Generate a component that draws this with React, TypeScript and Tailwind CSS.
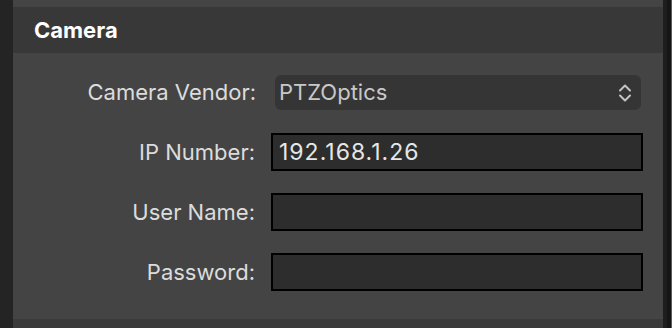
import React from 'react';

const font = { fontFamily: 'Inter, "Open Sans", sans-serif' };

const Field: React.FC<{ label: string; value?: string }> = ({ label, value }) => (
  <div className="flex items-center h-[38px]">
    <div className="w-[243px] pr-[1px] text-right text-[22px] text-[#dcdcdc]">{label}</div>
    <div className="ml-[15px] w-[372px] h-[38px] bg-[#2d2d2d] border-2 border-black flex items-center px-[6px] text-[23px] tracking-[1px] text-[#e6e6e6]">
      {value}
    </div>
  </div>
);

export default function App() {
  return (
    <div className="w-[672px] h-[328px] flex bg-[#151515] overflow-hidden" style={font}>
      <div className="w-[13px] bg-[#242424]" />
      <div className="w-[650px] flex flex-col">
        <div className="h-[7px] bg-[#444444]" />
        <div className="h-[46px] bg-[#383838] flex items-center pl-[21px]">
          <span className="text-[22px] font-bold text-white">Camera</span>
        </div>
        <div className="flex-1 bg-[#444444] flex flex-col pt-[22px]">
          <div className="flex items-center h-[35px]">
            <div className="w-[243px] text-right text-[22px] text-[#dcdcdc]">Camera Vendor:</div>
            <div className="ml-[19px] w-[366px] h-[35px] rounded-[6px] bg-[#353535] flex items-center justify-between pl-[4px] pr-[9px]">
              <span className="text-[22px] text-[#c8c8c8]">PTZOptics</span>
              <svg width="14" height="20" viewBox="0 0 14 20" fill="none" stroke="#c4c4c4" strokeWidth="2" strokeLinecap="round" strokeLinejoin="round">
                <path d="M2 7.5l5-5 5 5" />
                <path d="M2 12.5l5 5 5-5" />
              </svg>
            </div>
          </div>
          <div className="mt-[23px] flex flex-col gap-[22px]">
            <Field label="IP Number:" value="192.168.1.26" />
            <Field label="User Name:" />
            <Field label="Password:" />
          </div>
        </div>
        <div className="h-[9px] bg-[#3a3a3a]" />
      </div>
      <div className="w-[4px] bg-[#1e1e1e]" />
      <div className="w-[5px] bg-[#151515] border-r border-[#5a5a5a]" />
    </div>
  );
}
